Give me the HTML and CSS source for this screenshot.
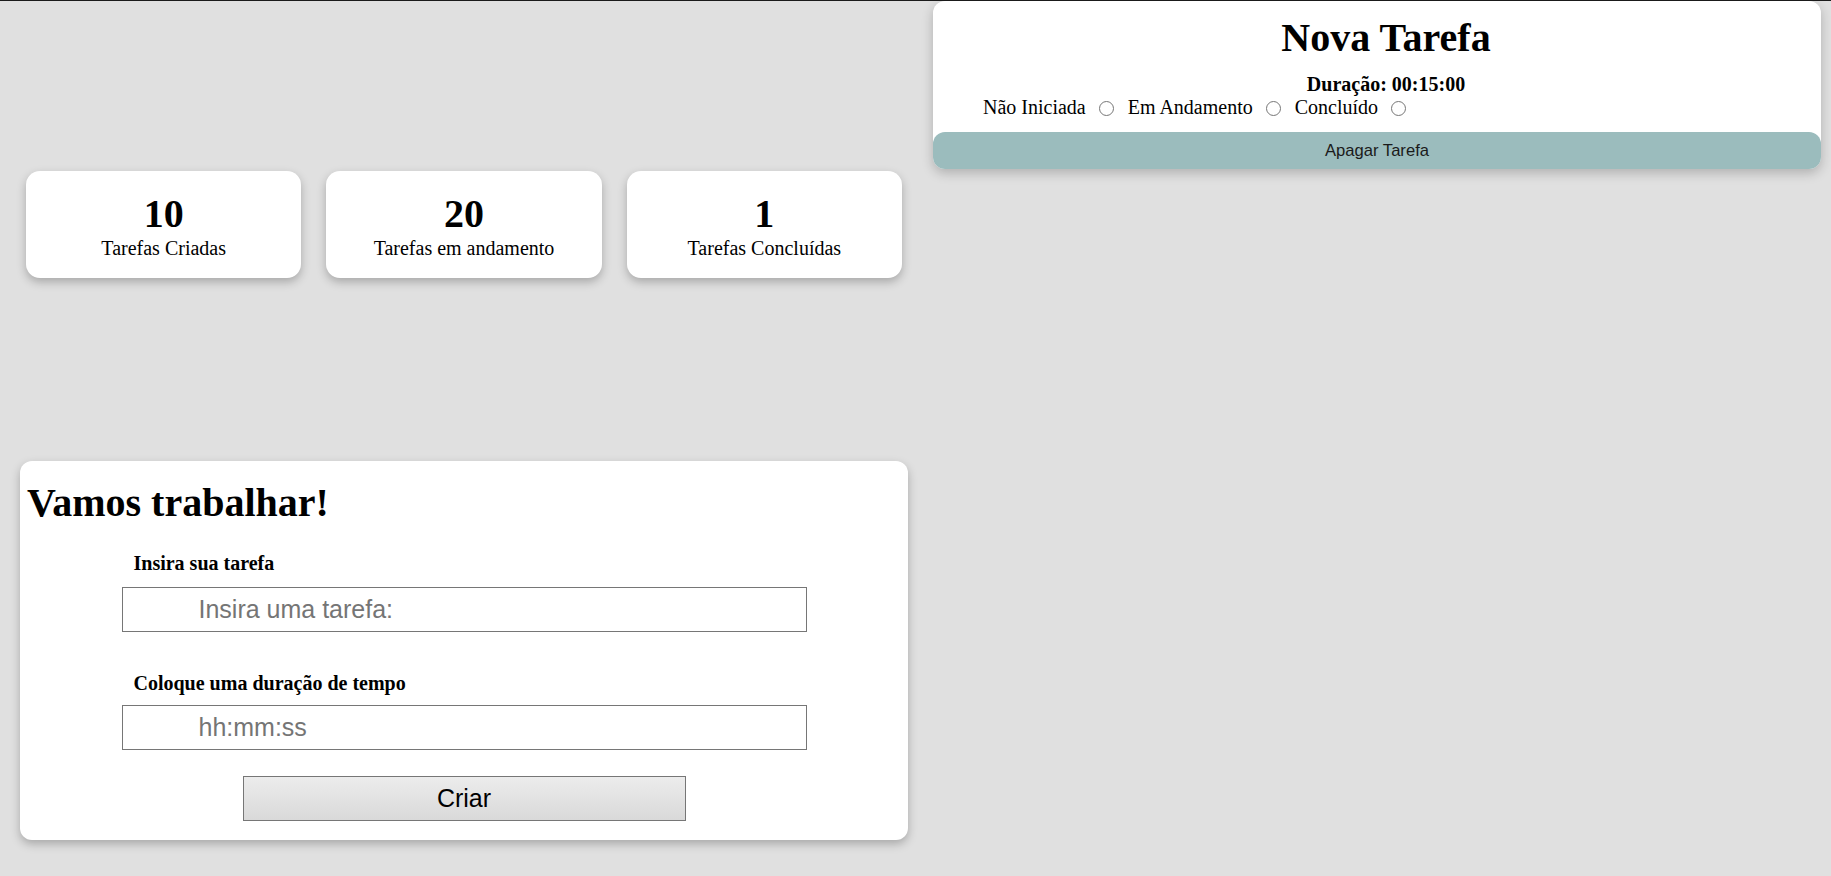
FILE: index.html
```html
<!DOCTYPE html>
<html lang="pt-BR">
<head>
<meta charset="utf-8">
<title>Tarefas</title>
<link rel="stylesheet" href="styles.css">
</head>
<body>
<div class="page">
  <div class="left">
    <div class="stats">
      <div class="stat"><h1>10</h1><p>Tarefas Criadas</p></div>
      <div class="stat"><h1>20</h1><p>Tarefas em andamento</p></div>
      <div class="stat"><h1>1</h1><p>Tarefas Concluídas</p></div>
    </div>
    <div class="form-card">
      <h1>Vamos trabalhar!</h1>
      <div class="form">
        <label class="field-label first">Insira sua tarefa</label>
        <input class="field first-field" type="text" placeholder="Insira uma tarefa:">
        <label class="field-label second">Coloque uma duração de tempo</label>
        <input class="field second-field" type="text" placeholder="hh:mm:ss">
        <button class="create" type="button">Criar</button>
      </div>
    </div>
  </div>
  <div class="right">
    <div class="task-card">
      <h1 class="task-title">Nova Tarefa</h1>
      <p class="task-dur">Duração: 00:15:00</p>
      <div class="status">
        <span class="opt">Não Iniciada</span><input class="radio" type="radio" name="st">
        <span class="opt">Em Andamento</span><input class="radio" type="radio" name="st">
        <span class="opt">Concluído</span><input class="radio" type="radio" name="st">
      </div>
      <button class="delete" type="button">Apagar Tarefa</button>
    </div>
  </div>
</div>
</body>
</html>
```

FILE: styles.css
```css
html, body {
  margin: 0;
  padding: 0;
}
body {
  background: #e0e0e0;
  border-top: 1px solid #1a1a1a;
  font-family: "Liberation Serif", "Times New Roman", serif;
  font-size: 20px;
  color: #000;
  min-height: 875px;
}
.page {
  display: flex;
  gap: 25px;
  padding: 0 10px 0 20px;
  align-items: flex-start;
}
.left {
  width: 888px;
  flex: none;
}
.right {
  width: 888px;
  flex: none;
}
.stats {
  display: flex;
  gap: 25px;
  padding: 0 6px 0 6px;
  margin-top: 170px;
}
.stat {
  flex: 1;
  background: #fff;
  border-radius: 14px;
  box-shadow: 0 4px 10px rgba(0, 0, 0, 0.25);
  padding: 20px 10px 18px;
  text-align: center;
}
.stat h1 {
  margin: 0;
  font-size: 40px;
  line-height: 46px;
  font-weight: bold;
}
.stat p {
  margin: 0;
  font-size: 20px;
  line-height: 23px;
}
.form-card {
  margin-top: 183px;
  background: #fff;
  border-radius: 12px;
  box-shadow: 0 4px 10px rgba(0, 0, 0, 0.25);
  padding: 19px 7px 19px;
}
.form-card h1 {
  margin: 0;
  font-size: 40px;
  line-height: 46px;
}
.form {
  width: 685px;
  margin: 0 auto;
  display: flex;
  flex-direction: column;
}
.field-label {
  display: block;
  font-weight: bold;
  font-size: 20px;
  line-height: 23px;
  padding-left: 12px;
}
.field-label.first {
  margin-top: 26px;
}
.field-label.second {
  margin-top: 40px;
}
.field {
  box-sizing: border-box;
  height: 45px;
  width: 685px;
  border: 1px solid #767676;
  border-radius: 0;
  padding: 0 0 0 76px;
  font-family: "Liberation Sans", Arial, sans-serif;
  font-size: 25px;
  color: #000;
  background: #fff;
  outline: none;
}
.first-field {
  margin: 12px 0 0;
}
.second-field {
  margin: 10px 0 0;
}
.field::placeholder {
  color: #757575;
}
.create {
  align-self: center;
  margin-top: 26px;
  width: 443px;
  height: 45px;
  box-sizing: border-box;
  border: 1px solid #767676;
  border-radius: 0;
  background: linear-gradient(#ececec, #d9d9d9);
  font-family: "Liberation Sans", Arial, sans-serif;
  font-size: 25px;
  color: #000;
  padding: 0;
}
.task-card {
  background: #fff;
  border-radius: 12px;
  box-shadow: 0 4px 12px rgba(0, 0, 0, 0.22);
  padding-top: 14px;
  display: flex;
  flex-direction: column;
}
.task-title {
  margin: 0;
  font-size: 40px;
  line-height: 46px;
  text-align: center;
  padding-left: 18px;
}
.task-dur {
  margin: 12px 0 0;
  font-weight: bold;
  font-size: 20px;
  line-height: 23px;
  text-align: center;
  padding-left: 18px;
}
.status {
  display: flex;
  align-items: center;
  padding-left: 50px;
  font-size: 20px;
  line-height: 23px;
  height: 23px;
}
.radio {
  width: 15px;
  height: 15px;
  margin: 2px 14px 0 13px;
  accent-color: #767676;
}
.delete {
  margin-top: 13px;
  height: 37px;
  border: none;
  border-radius: 12px;
  background: #9bbcbd;
  font-family: "Liberation Sans", Arial, sans-serif;
  font-size: 16.6px;
  color: #1a1a1a;
  padding: 0;
}
```
